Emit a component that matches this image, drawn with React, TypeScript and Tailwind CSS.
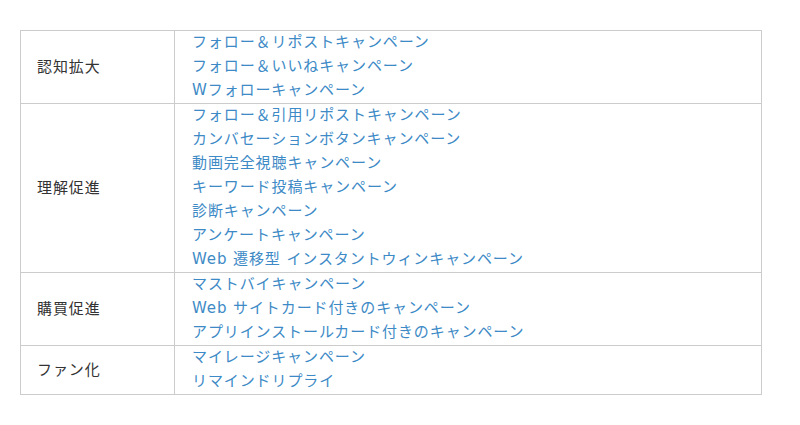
const rows: { label: string; items: string[] }[] = [
  {
    label: '認知拡大',
    items: ['フォロー＆リポストキャンペーン', 'フォロー＆いいねキャンペーン', 'Wフォローキャンペーン'],
  },
  {
    label: '理解促進',
    items: [
      'フォロー＆引用リポストキャンペーン',
      'カンバセーションボタンキャンペーン',
      '動画完全視聴キャンペーン',
      'キーワード投稿キャンペーン',
      '診断キャンペーン',
      'アンケートキャンペーン',
      'Web 遷移型 インスタントウィンキャンペーン',
    ],
  },
  {
    label: '購買促進',
    items: ['マストバイキャンペーン', 'Web サイトカード付きのキャンペーン', 'アプリインストールカード付きのキャンペーン'],
  },
  {
    label: 'ファン化',
    items: ['マイレージキャンペーン', 'リマインドリプライ'],
  },
];

export default function App() {
  return (
    <div className="w-[800px] h-[425px] bg-white pt-[30px] pl-[20px] font-['DejaVu_Sans','Noto_Sans_CJK_JP',sans-serif] text-[15px] tracking-[0.06em]">
      <table className="w-[742px] border-collapse">
        <tbody>
          {rows.map((row) => (
            <tr key={row.label}>
              <td className="w-[154px] border border-[#cccccc] pl-[16px] align-middle text-[#333333]">
                {row.label}
              </td>
              <td className="border border-[#cccccc] pl-[17px] py-0">
                {row.items.map((item) => (
                  <div key={item} className="h-[24px] leading-[22px] text-[#3d8ac6]">
                    {item}
                  </div>
                ))}
              </td>
            </tr>
          ))}
        </tbody>
      </table>
    </div>
  );
}
